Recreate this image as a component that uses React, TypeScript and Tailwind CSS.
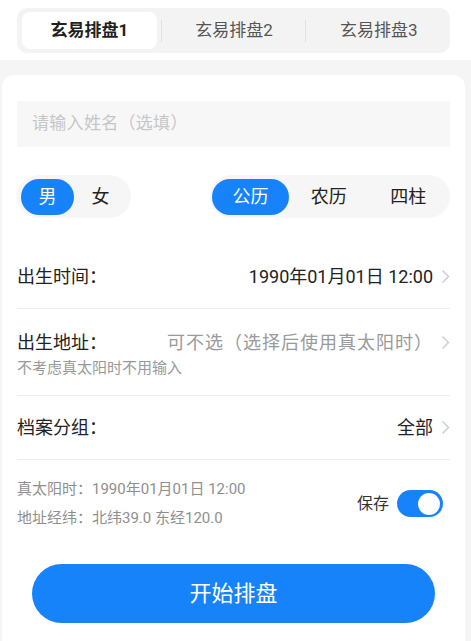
import React, { useState } from 'react';

const font = { fontFamily: 'Roboto, "Noto Sans CJK SC", "Noto Sans", sans-serif' };

const Chevron = () => (
  <svg width="9" height="15" viewBox="0 0 9 15" className="ml-[8px] shrink-0">
    <polyline points="1.5,1.5 7.5,7.5 1.5,13.5" fill="none" stroke="#c9c9c9" strokeWidth="1.3" />
  </svg>
);

export default function App() {
  const [tab, setTab] = useState(0);
  const [gender, setGender] = useState(0);
  const [cal, setCal] = useState(0);
  const [save, setSave] = useState(true);

  const tabs = ['玄易排盘1', '玄易排盘2', '玄易排盘3'];

  return (
    <div className="min-h-[641px] bg-[#f5f5f5] flex flex-col" style={font}>
      {/* Top tabs */}
      <div className="bg-white pt-[8px] pb-[7px] pl-[17px] pr-[21px]">
        <div className="flex items-center h-[45px] rounded-[10px] bg-[#f3f3f3]">
          {tabs.map((t, i) => (
            <React.Fragment key={t}>
              {i > 0 && <div className="w-px h-[22px] bg-[#e0e0e0]" />}
              <div className="flex-1 h-full py-[4px] pl-[5px] pr-[4px]">
                <button
                  onClick={() => setTab(i)}
                  className={`w-full h-full rounded-[8px] text-[17px] leading-none ${
                    tab === i ? 'bg-white font-bold text-[#1f1f1f]' : 'text-[#555555]'
                  }`}
                >
                  {t}
                </button>
              </div>
            </React.Fragment>
          ))}
        </div>
      </div>

      {/* Card */}
      <div className="flex-1 mt-[15px] ml-[2px] mr-[6px] bg-white rounded-t-[12px] px-[15px] pt-[26px]">
        <div className="h-[46px] bg-[#f7f7f7] flex items-center px-[15px]">
          <input
            placeholder="请输入姓名（选填）"
            className="w-full bg-transparent outline-none text-[17px] tracking-[0.3px] placeholder:text-[#c6c6c6] text-[#333]"
          />
        </div>

        <div className="flex justify-between mt-[28px]">
          <div className="flex items-center h-[43px] w-[114px] rounded-full bg-[#f6f6f6] px-[4px]">
            {['男', '女'].map((g, i) => (
              <button
                key={g}
                onClick={() => setGender(i)}
                className={`h-[36px] rounded-full text-[18px] ${
                  gender === i ? 'bg-[#1683fb] text-white w-[53px]' : 'text-[#222] flex-1'
                }`}
              >
                {g}
              </button>
            ))}
          </div>
          <div className="flex items-center h-[43px] w-[240px] rounded-full bg-[#f6f6f6] px-[2px]">
            {['公历', '农历', '四柱'].map((c, i) => (
              <button
                key={c}
                onClick={() => setCal(i)}
                className={`h-[36px] rounded-full text-[18px] ${
                  cal === i ? 'bg-[#1683fb] text-white w-[77px]' : 'text-[#222] flex-1'
                }`}
              >
                {c}
              </button>
            ))}
          </div>
        </div>

        <div className="mt-[27px] h-[64px] flex items-center border-b border-[#eeeeee]">
          <span className="text-[18px] text-[#222]">出生时间：</span>
          <span className="ml-auto text-[18px] text-[#222]">1990年01月01日 12:00</span>
          <Chevron />
        </div>

        <div className="pt-[20px] pb-[19px] border-b border-[#eeeeee]">
          <div className="flex items-center">
            <span className="text-[18px] text-[#222]">出生地址：</span>
            <span className="ml-auto text-[18px] tracking-[1px] text-[#9a9a9a]">可不选（选择后使用真太阳时）</span>
            <Chevron />
          </div>
          <div className="text-[15px] text-[#999] leading-none mt-[5px]">不考虑真太阳时不用输入</div>
        </div>

        <div className="h-[64px] flex items-center border-b border-[#eeeeee]">
          <span className="text-[18px] text-[#222]">档案分组：</span>
          <span className="ml-auto text-[18px] text-[#222]">全部</span>
          <Chevron />
        </div>

        <div className="flex items-center justify-between pt-[20px]">
          <div className="text-[15px] text-[#8f8f8f] flex flex-col gap-[11px] leading-[18px]">
            <div>真太阳时：1990年01月01日 12:00</div>
            <div>地址经纬：北纬39.0 东经120.0</div>
          </div>
          <div className="flex items-center mr-[7px]">
            <span className="text-[16px] text-[#333] mr-[8px]">保存</span>
            <button
              onClick={() => setSave(!save)}
              className={`w-[46px] h-[27px] rounded-full flex items-center px-[3px] ${
                save ? 'bg-[#1683fb] justify-end' : 'bg-[#ddd] justify-start'
              }`}
            >
              <span className="w-[22px] h-[22px] rounded-full bg-white block" />
            </button>
          </div>
        </div>

        <div className="px-[15px] mt-[37px]">
          <button className="w-full h-[59px] rounded-full bg-[#1683fb] text-white text-[22px]">开始排盘</button>
        </div>
      </div>
    </div>
  );
}
